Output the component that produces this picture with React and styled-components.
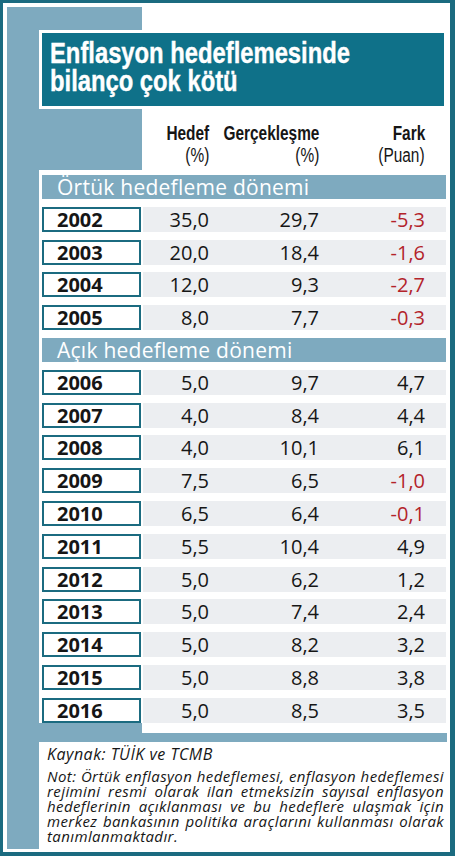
import React from "react";
import styled, { createGlobalStyle } from "styled-components";

const LIGHT = "#7eaabf";
const TEAL = "#0f7189";
const DARK = "#1b6b80";
const GRAY = "#eceef1";
const RED = "#b3232a";
const INK = "#161616";

const Global = createGlobalStyle`
  html, body { margin: 0; padding: 0; background: #fff; }
  * { box-sizing: border-box; }
`;

const Frame = styled.div`
  width: 455px;
  height: 856px;
  border-style: solid;
  border-color: ${DARK};
  border-width: 3px 5px 4px 3px;
  padding: 4px 3px 3px 4px;
  background: #fff;
  display: flex;
  flex-direction: column;
  font-family: "Open Sans", "Noto Sans", sans-serif;
  color: ${INK};
`;

const Top = styled.div`
  height: 163px;
  flex: none;
  padding: 23px 0 0 32px;
  background: linear-gradient(to right, ${LIGHT} 135px, #fff 135px);
`;

const TitleBox = styled.h1`
  margin: 0;
  border: 3px solid #fff;
  background: ${TEAL};
  color: #fff;
  padding: 6px 8px 11px;
  font-family: "Liberation Sans", Arial, sans-serif;
  font-weight: 700;
  font-size: 29px;
  line-height: 28px;
  overflow: hidden;
`;

const TitleLine = styled.span`
  display: block;
  white-space: nowrap;
  transform: scaleX(0.82);
  transform-origin: left center;
  -webkit-text-stroke: 0.4px #fff;
`;

const ColHeads = styled.div`
  margin-top: 13px;
  padding-left: 104px;
  display: grid;
  grid-template-columns: 66px 110px 106px;
  font-family: "Liberation Sans", Arial, sans-serif;
  font-size: 19.5px;
  line-height: 22px;
  color: ${INK};
`;

const ColHead = styled.div`
  display: flex;
  flex-direction: column;
  align-items: flex-end;
  white-space: nowrap;
`;

const HeadText = styled.span`
  display: block;
  font-weight: ${(p) => (p.$sub ? 400 : 700)};
  transform: scaleX(0.79);
  transform-origin: right center;
`;

const Main = styled.div`
  flex: none;
  padding: 5px 1px 0 35px;
  display: flex;
  flex-direction: column;
  gap: 7.8px;
  background: linear-gradient(to right, ${LIGHT} 32px, #fff 32px);
`;

const SectionBar = styled.div`
  height: 24px;
  background: ${LIGHT};
  color: #fff;
  font-size: 21px;
  letter-spacing: 0.25px;
  line-height: 24px;
  padding-left: 15px;
  white-space: nowrap;
`;

const Row = styled.div`
  height: 25px;
  display: flex;
  gap: 2px;
`;

const YearBox = styled.div`
  width: 99px;
  flex: none;
  border: 2px solid ${DARK};
  background: #fff;
  font-weight: 700;
  font-size: 20px;
  line-height: 21px;
  padding-left: 13px;
`;

const DataBar = styled.div`
  flex: 1;
  background: ${GRAY};
  display: grid;
  grid-template-columns: 66px 110px 106px;
  font-size: 20px;
  line-height: 25px;
`;

const Cell = styled.div`
  text-align: right;
  color: ${(p) => (p.$neg ? RED : INK)};
`;

const Tail = styled.div`
  flex: none;
  height: 10px;
  background: linear-gradient(to right, ${LIGHT} 135px, #fff 135px);
`;

const Band = styled.div`
  flex: none;
  height: 9px;
  background: ${LIGHT};
`;

const Foot = styled.div`
  flex: 1;
  padding: 3px 3px 0 40px;
  background: linear-gradient(to right, ${LIGHT} 32px, #fff 32px);
  font-style: italic;
  color: ${INK};
`;

const Source = styled.div`
  font-size: 16px;
  letter-spacing: 0.5px;
  line-height: 18px;
`;

const Note = styled.div`
  margin-top: 6px;
  font-size: 15px;
  letter-spacing: 0.4px;
  line-height: 15px;
`;

const NoteLine = styled.span`
  display: block;
  text-align: justify;
  text-align-last: ${(p) => (p.$last ? "left" : "justify")};
  white-space: nowrap;
`;

const early = [
  ["2002", "35,0", "29,7", "-5,3"],
  ["2003", "20,0", "18,4", "-1,6"],
  ["2004", "12,0", "9,3", "-2,7"],
  ["2005", "8,0", "7,7", "-0,3"],
];

const late = [
  ["2006", "5,0", "9,7", "4,7"],
  ["2007", "4,0", "8,4", "4,4"],
  ["2008", "4,0", "10,1", "6,1"],
  ["2009", "7,5", "6,5", "-1,0"],
  ["2010", "6,5", "6,4", "-0,1"],
  ["2011", "5,5", "10,4", "4,9"],
  ["2012", "5,0", "6,2", "1,2"],
  ["2013", "5,0", "7,4", "2,4"],
  ["2014", "5,0", "8,2", "3,2"],
  ["2015", "5,0", "8,8", "3,8"],
  ["2016", "5,0", "8,5", "3,5"],
];

const noteLines = [
  "Not: Örtük enflasyon hedeflemesi, enflasyon hedeflemesi",
  "rejimini resmi olarak ilan etmeksizin sayısal enflasyon",
  "hedeflerinin açıklanması ve bu hedeflere ulaşmak için",
  "merkez bankasının politika araçlarını kullanması olarak",
  "tanımlanmaktadır.",
];

const heads = [
  ["Hedef", "(%)"],
  ["Gerçekleşme", "(%)"],
  ["Fark", "(Puan)"],
];

function DataRow({ r }) {
  return (
    <Row>
      <YearBox>{r[0]}</YearBox>
      <DataBar>
        <Cell>{r[1]}</Cell>
        <Cell>{r[2]}</Cell>
        <Cell $neg={r[3].startsWith("-")}>{r[3]}</Cell>
      </DataBar>
    </Row>
  );
}

export default function App() {
  return (
    <>
      <Global />
      <Frame>
        <Top>
          <TitleBox>
            <TitleLine>Enflasyon hedeflemesinde</TitleLine>
            <TitleLine>bilanço çok kötü</TitleLine>
          </TitleBox>
          <ColHeads>
            {heads.map(([a, b]) => (
              <ColHead key={a}>
                <HeadText>{a}</HeadText>
                <HeadText $sub>{b}</HeadText>
              </ColHead>
            ))}
          </ColHeads>
        </Top>
        <Main>
          <SectionBar>Örtük hedefleme dönemi</SectionBar>
          {early.map((r) => (
            <DataRow key={r[0]} r={r} />
          ))}
          <SectionBar>Açık hedefleme dönemi</SectionBar>
          {late.map((r) => (
            <DataRow key={r[0]} r={r} />
          ))}
        </Main>
        <Tail />
        <Band />
        <Foot>
          <Source>Kaynak: TÜİK ve TCMB</Source>
          <Note>
            {noteLines.map((l, i) => (
              <NoteLine key={i} $last={i === noteLines.length - 1}>
                {l}
              </NoteLine>
            ))}
          </Note>
        </Foot>
      </Frame>
    </>
  );
}
